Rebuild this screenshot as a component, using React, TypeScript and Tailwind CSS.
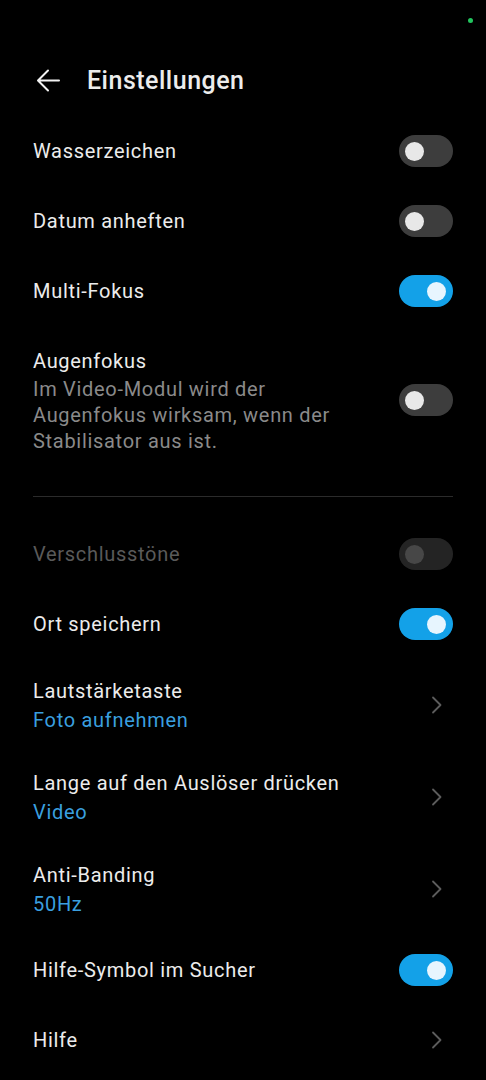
import React from 'react';

const Toggle: React.FC<{ on?: boolean; disabled?: boolean }> = ({ on, disabled }) => {
  if (disabled) {
    return (
      <div className="w-[54px] h-[32px] rounded-full bg-[#242424] flex items-center px-[6px] shrink-0">
        <div className="w-[19px] h-[19px] rounded-full bg-[#474747]" />
      </div>
    );
  }
  return (
    <div
      className={
        on
          ? 'w-[54px] h-[32px] rounded-full bg-[#13a1e8] flex items-center justify-end px-[7px] shrink-0'
          : 'w-[54px] h-[32px] rounded-full bg-[#3d3d3d] flex items-center px-[6px] shrink-0'
      }
    >
      <div className={on ? 'w-[19px] h-[19px] rounded-full bg-[#e7f5fe]' : 'w-[19px] h-[19px] rounded-full bg-[#e8e8e8]'} />
    </div>
  );
};

const Chevron = () => (
  <svg width="12" height="18" viewBox="0 0 12 18" className="shrink-0 mr-[10px]">
    <path d="M2 1.5 L9.5 9 L2 16.5" fill="none" stroke="#5c5c5c" strokeWidth="1.8" strokeLinecap="round" strokeLinejoin="round" />
  </svg>
);

const SwitchRow: React.FC<{ label: string; on?: boolean; disabled?: boolean }> = ({ label, on, disabled }) => (
  <div className="h-[70px] flex items-center justify-between">
    <span className={disabled ? 'text-[20px] tracking-[0.7px] text-[#5a5a5a]' : 'text-[20px] tracking-[0.7px] text-[#ececec]'}>{label}</span>
    <Toggle on={on} disabled={disabled} />
  </div>
);

const LinkRow: React.FC<{ label: string; value: string }> = ({ label, value }) => (
  <div className="h-[92px] flex items-center justify-between">
    <div className="flex flex-col tracking-[0.7px]">
      <span className="text-[20px] leading-[28px] text-[#ececec]">{label}</span>
      <span className="text-[20px] leading-[28px] text-[#3a9fdf] mt-[1px]">{value}</span>
    </div>
    <Chevron />
  </div>
);

export default function App() {
  return (
    <div className="w-[486px] h-[1080px] bg-black overflow-hidden" style={{ fontFamily: 'Roboto, "Noto Sans", sans-serif' }}>
      {/* status bar */}
      <div className="h-[45px] flex justify-end items-start pt-[18px] pr-[13px]">
        <div className="w-[5px] h-[5px] rounded-full bg-[#22c55e]" />
      </div>

      {/* header */}
      <div className="h-[71px] flex items-center pl-[36px]">
        <svg width="25" height="25" viewBox="0 0 25 25" className="shrink-0">
          <path d="M23 12.5 H2.5 M12 2.5 L2 12.5 L12 22.5" fill="none" stroke="#f2f2f2" strokeWidth="2" strokeLinecap="round" strokeLinejoin="round" />
        </svg>
        <h1 className="ml-[26px] text-[25px] font-medium tracking-[0.5px] text-[#ececec]">Einstellungen</h1>
      </div>

      <div className="px-[33px]">
        <SwitchRow label="Wasserzeichen" />
        <SwitchRow label="Datum anheften" />
        <SwitchRow label="Multi-Fokus" on />

        <div className="h-[148px] flex items-center justify-between">
          <div className="flex flex-col tracking-[0.7px]">
            <span className="text-[20px] leading-[28px] text-[#ececec]">Augenfokus</span>
            <span className="text-[20px] leading-[26px] text-[#8a8a8a] mt-[1px]">
              Im Video-Modul wird der
              <br />
              Augenfokus wirksam, wenn der
              <br />
              Stabilisator aus ist.
            </span>
          </div>
          <Toggle />
        </div>

        <div className="h-px bg-[#2b2b2b] my-[22px]" />

        <SwitchRow label="Verschlusstöne" disabled />
        <SwitchRow label="Ort speichern" on />
        <LinkRow label="Lautstärketaste" value="Foto aufnehmen" />
        <LinkRow label="Lange auf den Auslöser drücken" value="Video" />
        <LinkRow label="Anti-Banding" value="50Hz" />
        <SwitchRow label="Hilfe-Symbol im Sucher" on />
        <div className="h-[70px] flex items-center justify-between">
          <span className="text-[20px] tracking-[0.7px] text-[#ececec]">Hilfe</span>
          <Chevron />
        </div>
      </div>
    </div>
  );
}
